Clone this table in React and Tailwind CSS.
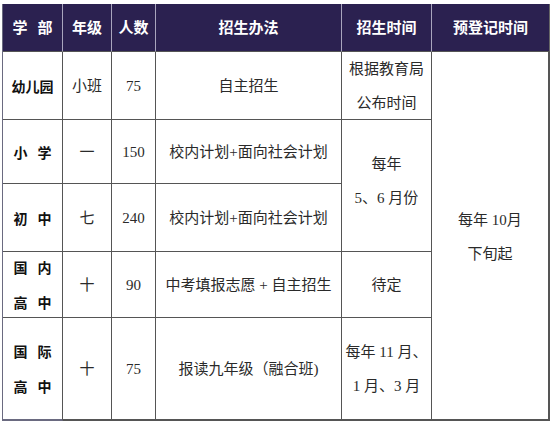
import React from "react";

const body = "font-['Liberation_Serif','Noto_Sans_CJK_SC',serif] text-[15px] text-[#2a2a2a]";
const head = "font-['Noto_Sans_CJK_SC',sans-serif] font-bold text-[15px] text-white";
const first = "font-['Noto_Sans_CJK_SC',sans-serif] font-bold text-[14px] text-[#111]";

function Spaced({ chars }) {
  return (
    <span className="inline-flex gap-[10px]">
      {chars.map((c, i) => (
        <span key={i}>{c}</span>
      ))}
    </span>
  );
}

function H({ children, last }) {
  return (
    <div
      className={
        "flex items-center justify-center bg-[#2b2150] border-b border-b-[#555] border-r " +
        (last ? "border-r-[#666]" : "border-r-[#a9a5bd]") +
        " " +
        head
      }
    >
      {children}
    </div>
  );
}

function C({ children, cls = "", f = body }) {
  return (
    <div
      className={
        "flex flex-col items-center justify-center text-center border-r border-b border-[#555] leading-[34px] " +
        f +
        " " +
        cls
      }
    >
      {children}
    </div>
  );
}

export default function App() {
  return (
    <div className="w-[551px] h-[424px] bg-white">
      <div className="ml-[2px] mt-[4px] w-[547px] grid grid-cols-[60px_49px_44px_186px_90px_118px] grid-rows-[48px_68px_64px_68px_66px_103px] border-l border-l-[#6a6a80]">
        <H>
          <Spaced chars={["学", "部"]} />
        </H>
        <H>年级</H>
        <H>人数</H>
        <H>招生办法</H>
        <H>招生时间</H>
        <H last>预登记时间</H>

        <C f={first}>幼儿园</C>
        <C>小班</C>
        <C>75</C>
        <C>自主招生</C>
        <C>
          <div>根据教育局</div>
          <div>公布时间</div>
        </C>
        <C cls="row-span-5 border-r-2 border-b-2 pt-[2px]">
          <div>每年 10月</div>
          <div>下旬起</div>
        </C>

        <C f={first}>
          <Spaced chars={["小", "学"]} />
        </C>
        <C>一</C>
        <C>150</C>
        <C>校内计划+面向社会计划</C>
        <C cls="row-span-2 pb-[10px]">
          <div>每年</div>
          <div>5、6 月份</div>
        </C>

        <C f={first}>
          <Spaced chars={["初", "中"]} />
        </C>
        <C>七</C>
        <C>240</C>
        <C>校内计划+面向社会计划</C>

        <C f={first} cls="leading-[35px]">
          <Spaced chars={["国", "内"]} />
          <Spaced chars={["高", "中"]} />
        </C>
        <C>十</C>
        <C>90</C>
        <C>中考填报志愿 + 自主招生</C>
        <C>待定</C>

        <C f={first} cls="leading-[35px] border-b-2 border-b-[#6a6a80]">
          <Spaced chars={["国", "际"]} />
          <Spaced chars={["高", "中"]} />
        </C>
        <C cls="border-b-2">十</C>
        <C cls="border-b-2">75</C>
        <C cls="border-b-2">报读九年级（融合班)</C>
        <C cls="border-b-2">
          <div>每年 11 月、</div>
          <div>1 月、3 月</div>
        </C>
      </div>
    </div>
  );
}
